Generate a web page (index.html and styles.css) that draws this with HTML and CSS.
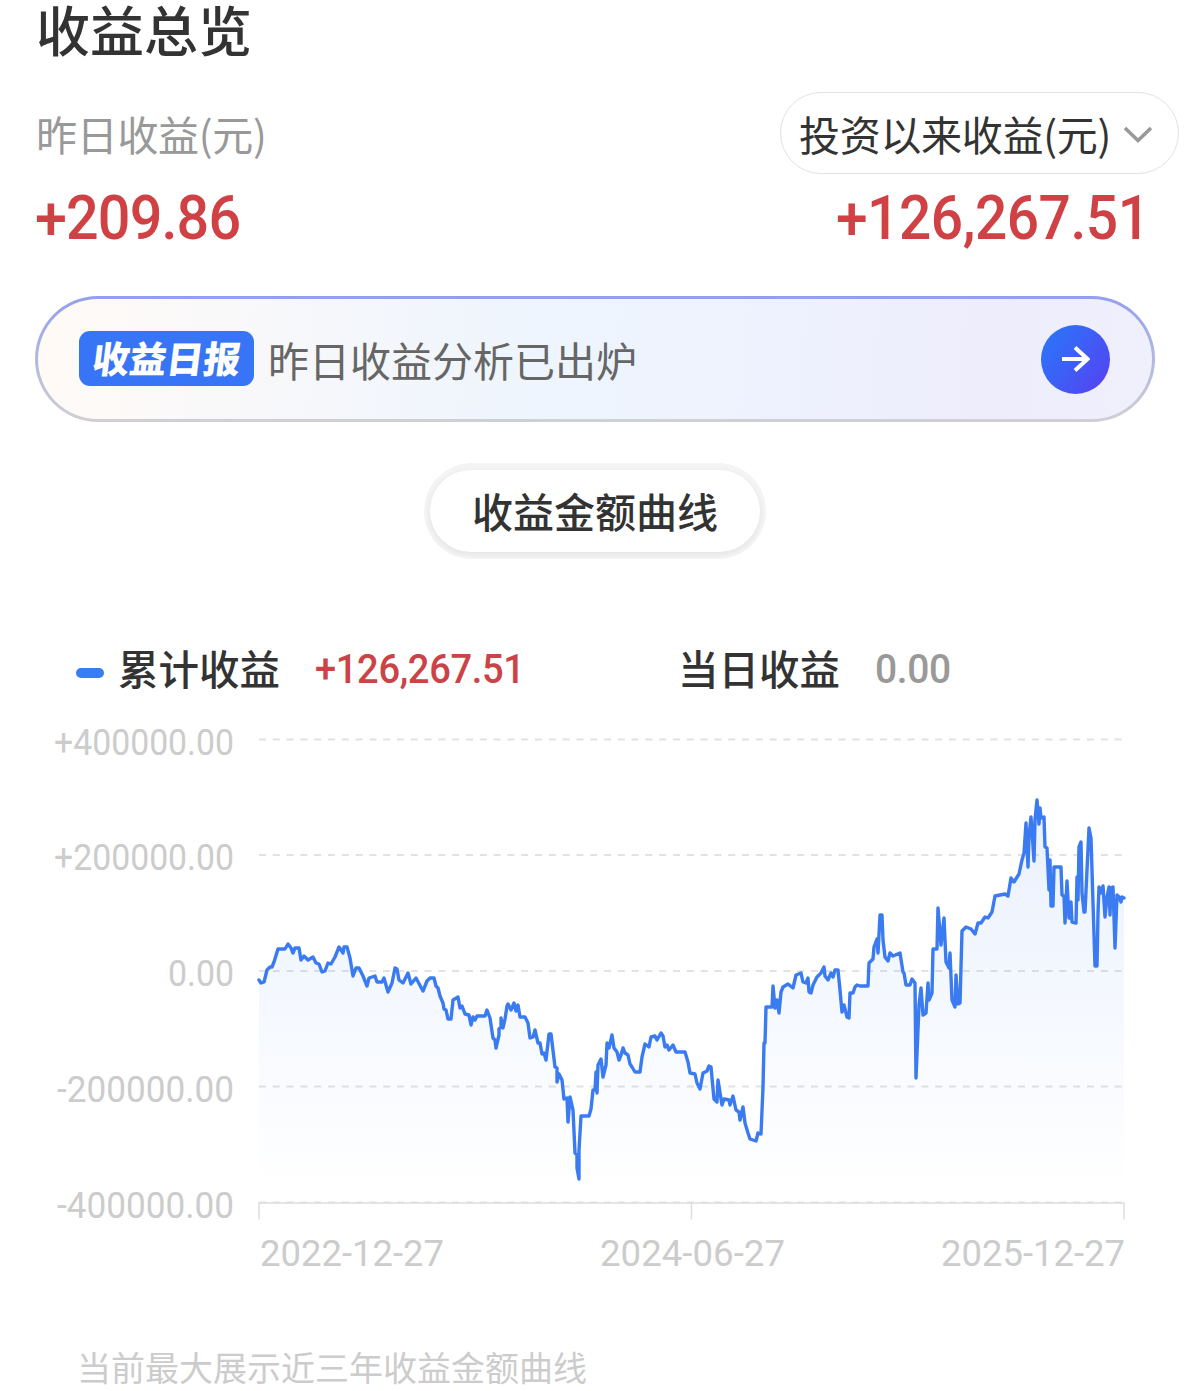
FILE: index.html
```html
<!DOCTYPE html>
<html lang="zh-CN">
	<head>
		<meta charset="utf-8">
		<meta name="viewport" content="width=device-width, initial-scale=1.0">
		<title>收益总览</title>
		<link rel="stylesheet" href="styles.css">
	</head>
	<body>
		<div id="container">
			<h1>收益总览</h1>
			<div class="labels">
				<span class="yesterday">昨日收益(元)</span>
				<div class="select">
					<span>投资以来收益(元)</span>
					<svg width="30" height="20" viewBox="0 0 30 20"><path d="M2 3 L15 15.500 L28 3" fill="none" stroke="#999" stroke-width="3.600"/></svg>
				</div>
			</div>
			<div class="amounts">
				<span class="amount">+209.86</span>
				<span class="amount total">+126,267.51</span>
			</div>

			<div class="banner">
				<span class="tag"><b>收益日报</b></span>
				<span class="bannertext">昨日收益分析已出炉</span>
				<span class="go">
					<svg width="28" height="26" viewBox="0 0 28 26"><path d="M0 13 H25 M13 1.500 L25.500 13 L13 24.500" fill="none" stroke="#fff" stroke-width="4"/></svg>
				</span>
			</div>

			<div class="tab"><span>收益金额曲线</span></div>

			<div class="legend">
				<i class="dash"></i>
				<span class="name">累计收益</span>
				<span class="value red">+126,267.51</span>
				<span class="name day">当日收益</span>
				<span class="value grey">0.00</span>
			</div>

			<svg class="chart" width="1193" height="570" viewBox="0 720 1193 570">
				<defs>
					<linearGradient id="fill" gradientUnits="userSpaceOnUse" x1="0" y1="800" x2="0" y2="1190">
						<stop offset="0" stop-color="#3a7bf2" stop-opacity=".11"/>
						<stop offset="1" stop-color="#3a7bf2" stop-opacity="0"/>
					</linearGradient>
				</defs>
				<g class="grid">
					<path d="M259 739.500 H1124"/>
					<path d="M259 855 H1124"/>
					<path d="M259 971 H1124"/>
					<path d="M259 1086.500 H1124"/>
					<path d="M259 1202.500 H1124"/>
				</g>
				<path class="axis" d="M259 1219.500 V1203 H1124 V1219.500 M691.500 1203 V1219.500"/>
				<polygon id="area" fill="url(#fill)"/>
				<polyline id="line" points="259,980 261,983 264,982 267,970 270,967 272,967 274,962 278,949 285,949 288,944 291,948 293,953 295,948 299,948 301,960 304,956 308,960 313,957 316,963 319,964 322,972 325,971 328,963 331,964 335,957 339,947 343,953 344,947 347,947 350,958 353,976 356,968 359,968 363,976 367,986 369,978 375,976 377,982 382,982 384,978 388,992 392,983 395,968 397,969 399,980 403,983 408,973 411,984 416,978 423,991 427,981 430,978 434,978 436,986 438,988 440,996 443,1003 444,1009 446,1010 448,1019 451,1019 453,1000 458,997 460,1008 462,1006 465,1014 469,1015 471,1025 473,1017 475,1020 477,1016 485,1016 487,1010 490,1018 493,1038 495,1040 496,1048 499,1035 499,1029 501,1027 501,1018 503,1028 505,1019 507,1006 508,1004 511,1010 514,1003 516,1011 518,1005 520,1017 525,1017 528,1023 530,1038 533,1037 535,1030 538,1043 540,1043 542,1054 544,1053 546,1060 549,1034 551,1034 555,1067 557,1068 557,1082 559,1074 562,1080 564,1099 567,1098 568,1122 570,1097 573,1110 575,1153 577,1155 577,1168 579,1179 579,1150 581,1116 589,1116 591,1109 593,1090 595,1090 596,1072 597,1093 598,1065 601,1059 603,1077 606,1065 607,1043 609,1048 612,1035 614,1048 617,1052 619,1060 621,1055 623,1048 625,1053 628,1055 630,1064 632,1067 635,1072 640,1072 642,1057 645,1044 649,1047 651,1037 655,1036 657,1040 661,1033 663,1036 665,1047 667,1045 669,1050 673,1045 676,1052 685,1052 688,1062 690,1073 695,1074 697,1083 700,1089 703,1073 707,1071 709,1066 711,1067 714,1099 717,1102 718,1080 722,1105 724,1099 729,1100 730,1105 733,1096 736,1110 739,1112 740,1120 743,1107 745,1123 748,1133 750,1139 756,1141 758,1133 761,1134 763,1087 764,1043 765,1043 766,1007 772,1007 773,986 775,1008 777,1000 779,1013 781,992 783,987 788,984 793,988 796,975 801,973 803,982 806,983 808,978 809,992 811,993 813,985 817,977 821,973 824,967 825,976 828,980 831,973 833,977 835,970 838,970 840,990 842,1012 844,1005 847,1017 849,1018 850,993 853,993 855,987 857,985 860,986 868,986 869,963 873,959 874,947 877,939 878,953 880,915 882,915 883,940 885,957 888,961 890,953 893,956 900,953 903,972 904,973 906,985 910,985 912,979 915,983 916,1078 919,1005 921,988 923,1015 926,1013 928,983 929,1000 932,993 933,949 937,949 938,908 941,945 944,918 946,962 949,968 950,953 952,1000 955,1007 956,975 958,1004 960,1003 962,931 966,927 971,929 975,934 978,923 981,923 985,917 988,918 992,912 995,896 1005,894 1008,896 1011,878 1014,882 1019,874 1022,860 1024,853 1026,823 1028,867 1029,836 1031,817 1034,861 1035,820 1037,800 1039,824 1040,808 1041,818 1044,817 1045,847 1047,848 1049,890 1050,860 1051,906 1053,906 1054,867 1061,867 1062,895 1064,896 1065,923 1067,881 1069,918 1071,902 1072,922 1076,923 1077,877 1078,900 1079,847 1081,842 1082,893 1084,912 1085,912 1087,870 1089,828 1091,838 1093,903 1095,966 1097,966 1098,913 1099,887 1101,893 1103,886 1105,917 1107,897 1109,887 1110,915 1111,888 1113,887 1115,948 1117,895 1119,897 1121,902 1122,897 1124,898"/>
				<g class="ylabel">
					<text x="54" y="755" textLength="180" lengthAdjust="spacingAndGlyphs">+400000.00</text>
					<text x="54" y="870" textLength="180" lengthAdjust="spacingAndGlyphs">+200000.00</text>
					<text x="168" y="986" textLength="66" lengthAdjust="spacingAndGlyphs">0.00</text>
					<text x="57" y="1102" textLength="177" lengthAdjust="spacingAndGlyphs">-200000.00</text>
					<text x="57" y="1218" textLength="177" lengthAdjust="spacingAndGlyphs">-400000.00</text>
				</g>
				<g class="xlabel">
					<text x="260" y="1266" textLength="184" lengthAdjust="spacingAndGlyphs">2022-12-27</text>
					<text x="600" y="1266" textLength="185" lengthAdjust="spacingAndGlyphs">2024-06-27</text>
					<text x="941" y="1266" textLength="184" lengthAdjust="spacingAndGlyphs">2025-12-27</text>
				</g>
			</svg>

			<p class="note">当前最大展示近三年收益金额曲线</p>
		</div>
		<script>
			// close the line down to the axis for the shaded area
			var points = document.getElementById('line').getAttribute('points');
			document.getElementById('area').setAttribute('points', '259,1202 ' + points + ' 1124,1202');
		</script>
	</body>
</html>
```
FILE: styles.css
```css
html, body {
	margin: 0;
	padding: 0;
}
body {
	background-color: #fff;
	color: #333;
	font-family: "Noto Sans CJK SC", sans-serif;
}
#container {
	width: 1193px;
	height: 1391px;
}
h1 {
	margin: 0 0 0 36px;
	height: 92px;
	font-size: 54px;
	font-weight: 500;
	line-height: 58px;
}
.labels {
	display: flex;
	justify-content: space-between;
	align-items: center;
	height: 82px;
	padding: 0 14px 0 36px;
	font-size: 41px;
	letter-spacing: -.3px;
}
.yesterday {
	color: #999;
}
.select {
	display: flex;
	align-items: center;
	box-sizing: border-box;
	width: 399px;
	height: 82px;
	padding-left: 18px;
	border: 1px solid #e2e2e2;
	border-radius: 41px;
	white-space: nowrap;
}
.select svg {
	margin: 4px 0 0 12px;
}
.amounts {
	display: flex;
	justify-content: space-between;
	height: 122px;
	padding: 0 43px 0 35px;
	color: #d04145;
	font: 500 60.500px/89px Roboto, sans-serif;
}
/* Roboto is a little wide for the figures */
.amount {
	letter-spacing: -.9px;
	transform: scaleX(.95);
	transform-origin: left;
}
.total {
	letter-spacing: -.5px;
	transform: scaleX(.94);
	transform-origin: right;
}
.banner {
	display: flex;
	align-items: center;
	box-sizing: border-box;
	width: 1120px;
	height: 126px;
	margin-left: 35px;
	padding: 0 42px 0 41px;
	border: 3px solid transparent;
	border-radius: 63px;
	background: linear-gradient(95deg, #fffaf6 0%, #f8f8fa 20%, #eef5fe 45%, #eef3fe 60%, #eeedfc 85%, #f0effc 100%) padding-box, linear-gradient(#929ff0, #d0d0d3) border-box;
}
.tag {
	width: 175px;
	height: 55px;
	margin-bottom: 2px;
	border-radius: 11px;
	background-color: #3875f6;
	color: #fff;
	font-size: 37px;
	line-height: 53px;
	text-align: center;
}
.tag b {
	display: inline-block;
	font-weight: 900;
	transform: skewX(-7deg);
}
.bannertext {
	margin-left: 14px;
	color: #666;
	font-size: 41px;
}
.go {
	display: flex;
	align-items: center;
	justify-content: center;
	width: 69px;
	height: 69px;
	margin-left: auto;
	border-radius: 50%;
	background: linear-gradient(125deg, #2d73f8 10%, #3c60f6 45%, #5148f3 85%);
}
.tab {
	box-sizing: border-box;
	width: 342px;
	height: 96px;
	margin: 41px 0 0 424px;
	padding: 7px 6px;
	border-radius: 48px;
	background-color: #f4f4f4;
}
.tab span {
	display: block;
	height: 82px;
	border-radius: 41px;
	background-color: #fff;
	box-shadow: 0 2px 6px rgba(0, 0, 0, .08);
	font-size: 41px;
	font-weight: 500;
	line-height: 81px;
	text-align: center;
}
.legend {
	display: flex;
	align-items: center;
	height: 80px;
	margin-top: 70px;
	padding-left: 76px;
}
.dash {
	width: 28px;
	height: 10px;
	margin: 7px 14px 0 0;
	border-radius: 5px;
	background-color: #3a7bf6;
}
.name {
	width: 197px;
	margin-bottom: 3px;
	font-size: 40.500px;
	font-weight: 500;
}
.day {
	margin-left: -1px;
}
.value {
	font: 500 41px Roboto, sans-serif;
	letter-spacing: -.4px;
	transform: scaleX(.93);
	transform-origin: left;
}
.red {
	width: 364px;
	color: #cb4347;
}
.grey {
	color: #999;
	transform: scaleX(.95);
}
.chart {
	display: block;
	margin-top: 11px;
}
.grid path {
	stroke: #e2e2e4;
	stroke-width: 2;
	stroke-dasharray: 7 6.800;
}
.axis {
	fill: none;
	stroke: #dedede;
	stroke-width: 1.500;
}
#line {
	fill: none;
	stroke: #3a7bf2;
	stroke-width: 3.400;
	stroke-linejoin: round;
	stroke-linecap: round;
}
.ylabel, .xlabel {
	fill: #ccc;
	font: 400 37px Roboto, sans-serif;
}
.note {
	margin: 53px 0 0 77px;
	color: #ccc;
	font-size: 34px;
	line-height: 48px;
}
```
